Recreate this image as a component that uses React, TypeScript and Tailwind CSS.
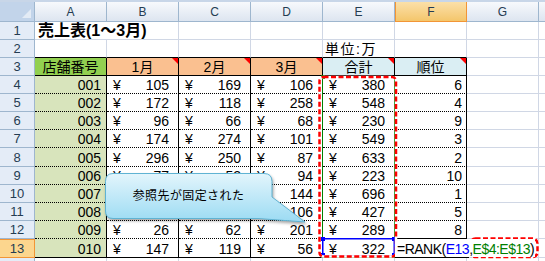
import React from "react";

const cols = ["A", "B", "C", "D", "E", "F", "G"];

// 店舗番号, 1月, 2月, 3月, 合計, 順位
const data: [string, number, number, number, number, number][] = [
  ["001", 105, 169, 106, 380, 6],
  ["002", 172, 118, 258, 548, 4],
  ["003", 96, 66, 68, 230, 9],
  ["004", 174, 274, 101, 549, 3],
  ["005", 296, 250, 87, 633, 2],
  ["006", 77, 52, 94, 223, 10],
  ["007", 299, 253, 144, 696, 1],
  ["008", 155, 166, 106, 427, 5],
  ["009", 26, 62, 201, 289, 8],
  ["010", 147, 119, 56, 322, 0],
];

const heights = ["h-[18px]", "h-[18px]", "h-[18px]", "h-[18px]", "h-[19px]", "h-[18px]", "h-[18px]", "h-[18px]", "h-[18px]", "h-[19px]"];

const grid = "w-[72px] shrink-0 border-r border-b border-[#d0d7e5]";
const rowHead =
  "flex w-[35px] shrink-0 items-center justify-center border-r border-b border-[#9eb6ce] bg-[#e4ecf7] text-[13px] text-[#243c52]";

const Tri = () => (
  <span className="absolute right-0 top-0 h-0 w-0 border-t-[6px] border-l-[6px] border-t-[#ff0000] border-l-transparent" />
);

const RowHead = ({ n, on }: { n?: number; on?: boolean }) =>
  on ? (
    <div className="flex w-[35px] shrink-0 items-center justify-center border-t border-r border-b border-[#f29536] bg-[#fcd68e] text-[13px] text-[#243c52]">
      {n}
    </div>
  ) : (
    <div className={rowHead}>{n}</div>
  );

const Money = ({ v, last }: { v: number; last: boolean }) => (
  <div
    className={
      last
        ? "flex w-[72px] shrink-0 items-center justify-between border-r border-b border-black pl-[6px] pr-[9px] pt-[1px]"
        : "flex w-[72px] shrink-0 items-center justify-between border-r border-b border-black pl-[6px] pr-[9px] pt-[1px] [border-bottom-style:dotted]"
    }
  >
    <span>¥</span>
    <span>{v}</span>
  </div>
);

const Annotations = () => (
  <svg className="pointer-events-none absolute left-0 top-0" width="545" height="261">
    {/* range finder E$4:E$13 */}
    <rect x="322.5" y="76.5" width="72" height="181" fill="none" stroke="#008000" strokeWidth="1" />
    <rect x="321" y="75" width="4" height="4" fill="#008000" />
    {/* range finder E13 */}
    <rect x="322.75" y="238.75" width="71.5" height="17.5" fill="none" stroke="#0000ff" strokeWidth="1.5" />
    <rect x="321" y="237" width="4" height="4" fill="#0000ff" />
    <rect x="321" y="253" width="4" height="4" fill="#0000ff" />
    <rect x="392" y="237" width="4" height="4" fill="#0000ff" />
    <rect x="392" y="253" width="4" height="4" fill="#0000ff" />
    {/* fill handle */}
    <rect x="465" y="254" width="4" height="4" fill="#000" />
    {/* red dashed marks */}
    <rect x="319.5" y="77" width="76.5" height="179.5" rx="4" fill="none" stroke="#fff" strokeWidth="2.5" />
    <rect x="319.5" y="77" width="76.5" height="179.5" rx="4" fill="none" stroke="#ff0000" strokeWidth="2.5" strokeDasharray="5 2.5" />
    <rect x="470.5" y="238.5" width="67" height="18.5" rx="5" fill="none" stroke="#fff" strokeWidth="2.5" />
    <rect x="470.5" y="238.5" width="67" height="18.5" rx="5" fill="none" stroke="#ff0000" strokeWidth="2.5" strokeDasharray="5 2.5" />
  </svg>
);

const Callout = () => (
  <div className="pointer-events-none absolute left-[100px] top-[168px] h-[60px] w-[210px]">
    <svg className="absolute left-0 top-0 drop-shadow-[1px_2px_1.5px_rgba(0,0,0,0.35)]" width="210" height="60">
      <defs>
        <linearGradient id="cg" x1="0" y1="0" x2="0" y2="1">
          <stop offset="0" stopColor="#e3f5fc" />
          <stop offset="1" stopColor="#9bdbf3" />
        </linearGradient>
      </defs>
      <path
        d="M13 5.5 H164 Q172 5.5 172 13.5 V29 L205 54 L158 50.5 H13 Q5.5 50.5 5.5 43 V13.5 Q5.5 5.5 13 5.5 Z"
        fill="url(#cg)"
        stroke="#5fb3d3"
        strokeWidth="1"
      />
    </svg>
    <div className="absolute left-[5px] top-[5px] flex h-[45px] w-[167px] items-center justify-center text-[12px] tracking-[0.4px] text-black">
      参照先が固定された
    </div>
  </div>
);

export default function App() {
  return (
    <div className="relative h-[261px] w-[545px] overflow-hidden bg-white font-['Liberation_Sans','Noto_Sans_CJK_JP',sans-serif] text-[14px] leading-none text-black">
      {/* column headers */}
      <div className="flex h-[22px] border-t-2 border-[#c8d6e8]">
        <div className="relative w-[35px] shrink-0 border-r border-b border-[#9eb6ce] bg-[#c2d4ea]">
          <span className="absolute bottom-[3px] right-[3px] h-0 w-0 border-b-[9px] border-l-[9px] border-b-[#e3ebf5] border-l-transparent" />
        </div>
        {cols.map((c) =>
          c === "F" ? (
            <div
              key={c}
              className="flex w-[72px] shrink-0 items-center justify-center border-r border-b border-l border-[#f29536] bg-gradient-to-b from-[#fbe0a8] to-[#f4c66b] text-[12px] text-[#243c52]"
            >
              {c}
            </div>
          ) : (
            <div
              key={c}
              className="flex w-[72px] shrink-0 items-center justify-center border-r border-b border-[#9eb6ce] bg-gradient-to-b from-[#f7f9fc] to-[#dde5f0] text-[12px] text-[#243c52]"
            >
              {c}
            </div>
          )
        )}
        <div className="flex-1 border-b border-[#9eb6ce] bg-gradient-to-b from-[#f7f9fc] to-[#dde5f0]" />
      </div>

      {/* row 1 */}
      <div className="flex h-[18px]">
        <RowHead n={1} />
        <div className="flex w-[72px] shrink-0 items-end whitespace-nowrap border-b border-[#d0d7e5] pl-[3px] text-[16px] font-bold">
          売上表(1～3月)
        </div>
        {cols.slice(1).map((c) => (
          <div key={c} className={grid} />
        ))}
        <div className="flex-1 border-b border-[#d0d7e5]" />
      </div>

      {/* row 2 */}
      <div className="flex h-[18px]">
        <RowHead n={2} />
        <div className="w-[72px] shrink-0 border-r border-b border-r-[#d0d7e5] border-b-black" />
        <div className="w-[72px] shrink-0 border-r border-b border-r-[#d0d7e5] border-b-black" />
        <div className="w-[72px] shrink-0 border-r border-b border-r-[#d0d7e5] border-b-black" />
        <div className="w-[72px] shrink-0 border-r border-b border-r-[#d0d7e5] border-b-black" />
        <div className="flex w-[72px] shrink-0 items-end border-r border-b border-r-[#d0d7e5] border-b-black pb-[1px] pl-[2px] tracking-[1.5px]">
          単位:万
        </div>
        <div className="w-[72px] shrink-0 border-r border-b border-r-[#d0d7e5] border-b-black" />
        <div className={grid} />
        <div className="flex-1 border-b border-[#d0d7e5]" />
      </div>

      {/* row 3 */}
      <div className="flex h-[18px]">
        <RowHead n={3} />
        <div className="flex w-[72px] shrink-0 items-center justify-center border-r border-b border-black bg-[#92d050]">
          店舗番号
        </div>
        <div className="relative flex w-[72px] shrink-0 items-center justify-center border-r border-b border-black bg-[#fac090]">
          1月
          <Tri />
        </div>
        <div className="relative flex w-[72px] shrink-0 items-center justify-center border-r border-b border-black bg-[#fac090]">
          2月
          <Tri />
        </div>
        <div className="relative flex w-[72px] shrink-0 items-center justify-center border-r border-b border-black bg-[#fac090]">
          3月
          <Tri />
        </div>
        <div className="relative flex w-[72px] shrink-0 items-center justify-center border-r border-b border-black bg-[#daeef3]">
          合計
          <Tri />
        </div>
        <div className="relative flex w-[72px] shrink-0 items-center justify-center border-r border-b border-black bg-[#daeef3]">
          順位
          <Tri />
        </div>
        <div className={grid} />
        <div className="flex-1 border-b border-[#d0d7e5]" />
      </div>

      {/* rows 4-13 */}
      {data.map((r, i) => {
        const last = i === data.length - 1;
        const edit = i === data.length - 2;
        return (
          <div key={r[0]} className={"flex " + heights[i]}>
            <RowHead n={i + 4} on={last} />
            <div
              className={
                last
                  ? "flex w-[72px] shrink-0 items-center justify-end border-r border-b border-black bg-[#d8e4bc] pr-[5px] pt-[1px]"
                  : "flex w-[72px] shrink-0 items-center justify-end border-r border-b border-black bg-[#d8e4bc] pr-[5px] pt-[1px] [border-bottom-style:dotted]"
              }
            >
              {r[0]}
            </div>
            <Money v={r[1]} last={last} />
            <Money v={r[2]} last={last} />
            <Money v={r[3]} last={last} />
            <Money v={r[4]} last={last} />
            {last ? (
              <div className="relative flex w-[72px] shrink-0 items-center border-r border-b border-black">
                <span className="relative z-10 flex h-full items-center whitespace-nowrap bg-white pl-[2px] pr-[1px] pt-[1px] text-[14px] tracking-[-0.5px]">
                  =RANK(<span className="text-[#0000ff]">E13</span>,<span className="text-[#008000]">E$4:E$13</span>)
                </span>
              </div>
            ) : (
              <div
                className={
                  edit
                    ? "flex w-[72px] shrink-0 items-center justify-end border-r border-b border-black pr-[4px] pt-[1px]"
                    : "flex w-[72px] shrink-0 items-center justify-end border-r border-b border-black pr-[4px] pt-[1px] [border-bottom-style:dotted]"
                }
              >
                {r[5]}
              </div>
            )}
            <div className={grid} />
            <div className="flex-1 border-b border-[#d0d7e5]" />
          </div>
        );
      })}

      {/* row 14, cut off by the window */}
      <div className="flex h-[18px]">
        <RowHead />
        {cols.map((c) => (
          <div key={c} className={grid} />
        ))}
        <div className="flex-1 border-b border-[#d0d7e5]" />
      </div>

      <Annotations />
      <Callout />
    </div>
  );
}
